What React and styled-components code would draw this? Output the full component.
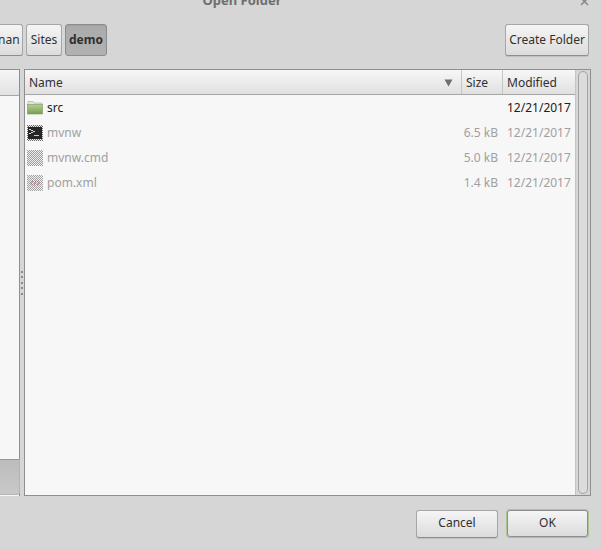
import React from 'react';
import styled, { createGlobalStyle } from 'styled-components';

const GlobalStyle = createGlobalStyle`
  html, body {
    margin: 0;
    padding: 0;
    background: #d6d6d6;
  }
`

const Dialog = styled.div`
  display: flex;
  flex-direction: column;
  width: 601px;
  height: 549px;
  overflow: hidden;
  background: #d6d6d6;
  color: #303030;
  font-family: "Noto Sans", sans-serif;
  font-size: 12px;
`
const TitleBar = styled.div`
  position: relative;
  flex: none;
  height: 8px;
  overflow: hidden;
  display: flex;
  justify-content: center;
  align-items: flex-end;
  font-size: 13px;
  font-weight: 700;
  color: #6e6e6e;
  line-height: 16px;
  padding-right: 117px;
`
const CloseMark = styled.svg`
  position: absolute;
  right: 11px;
  top: 0;
`
const PathRow = styled.div`
  flex: none;
  display: flex;
  justify-content: space-between;
  height: 32px;
  margin-top: 16px;
  padding-right: 12px;
`
const PathButtons = styled.div`
  display: flex;
  justify-content: flex-end;
  gap: 3px;
  width: 107px;
  overflow: hidden;
`
const Button = styled.button`
  box-sizing: border-box;
  flex: none;
  height: ${p => p.$h || 32}px;
  width: ${p => p.$w}px;
  padding: ${p => (p.$clipped ? '0 3px 2px 0' : '0 0 2px')};
  border: 1px solid #a6a6a6;
  border-bottom-color: #8e8e8e;
  border-radius: 3px;
  background: linear-gradient(#f5f5f5, #dcdcdc);
  box-shadow: 0 1px 0 #c0c0c0;
  color: #303030;
  font: inherit;
  text-align: ${p => (p.$clipped ? 'right' : 'center')};
`
const ActiveButton = styled(Button)`
  background: linear-gradient(#aaaaaa, #b2b2b2);
  border-color: #8c8c8c;
  font-weight: 700;
  box-shadow: inset 0 1px 1px #a0a0a0;
`
const OkButton = styled(Button)`
  border-color: #8e8e8e;
  box-shadow: 0 0 0 1px #a9c48f;
  margin: 1px;
`
const Main = styled.div`
  flex: none;
  display: flex;
  height: 427px;
  margin-top: 13px;
  padding-right: 11px;
`
const Sidebar = styled.div`
  box-sizing: border-box;
  flex: none;
  display: flex;
  flex-direction: column;
  width: 20px;
  border: 1px solid #8f8f8f;
  border-left: 0;
  border-bottom: 0;
  background: #f7f7f7;
`
const SidebarHead = styled.div`
  height: 25px;
  flex: none;
  background: linear-gradient(#f6f6f6, #e2e2e2);
  border-bottom: 1px solid #a6a6a6;
`
const SidebarList = styled.div`
  flex: 1;
`
const SidebarTools = styled.div`
  box-sizing: border-box;
  flex: none;
  height: 36px;
  margin: 0 -1px 1px 0;
  background: linear-gradient(#bcbcbc, #c8c8c8);
  border-top: 1px solid #969696;
  border-right: 1px solid #b4b4b4;
  border-bottom: 1px solid #b4b4b4;
  border-bottom-right-radius: 3px;
`
const Handle = styled.div`
  flex: none;
  width: 4px;
  display: flex;
  flex-direction: column;
  align-items: center;
  justify-content: center;
  gap: 3.5px;
`
const Dot = styled.i`
  width: 2px;
  height: 2px;
  background: #8a8a8a;
`
const FilePanel = styled.div`
  box-sizing: border-box;
  flex: 1;
  display: flex;
  border: 1px solid #8f8f8f;
  background: #f7f7f7;
`
const FileList = styled.div`
  flex: 1;
  display: flex;
  flex-direction: column;
  min-width: 0;
`
const HeadRow = styled.div`
  display: grid;
  grid-template-columns: 436px 41px 73px;
  flex: none;
  height: 25px;
  background: linear-gradient(#f7f7f7, #e0e0e0);
  border-bottom: 1px solid #a6a6a6;
  box-sizing: border-box;
`
const HeadCell = styled.div`
  display: flex;
  align-items: center;
  justify-content: space-between;
  padding: 1px 8px 0 4px;
  border-left: ${p => (p.$first ? '0' : '1px solid #c6c6c6')};
`
const Row = styled.div`
  display: grid;
  grid-template-columns: 436px 41px 73px;
  height: 25px;
  align-items: center;
  color: ${p => (p.$dim ? '#a0a0a0' : '#202020')};
`
const NameCell = styled.div`
  display: flex;
  align-items: center;
  gap: 4px;
  padding-left: 2px;
`
const SizeCell = styled.div`
  text-align: right;
  padding-right: 4px;
`
const DateCell = styled.div`
  padding-left: 5px;
`
const Scrollbar = styled.div`
  flex: none;
  box-sizing: border-box;
  width: 15px;
  background: #d6d6d6;
  border-left: 1px solid #c4c4c4;
  padding: 1px 2px;
  display: flex;
`
const Thumb = styled.div`
  flex: 1;
  border: 1px solid #a3a3a3;
  border-radius: 5px;
  background: #dcdcdc;
`
const Footer = styled.div`
  flex: none;
  display: flex;
  justify-content: flex-end;
  align-items: center;
  gap: 8px;
  height: 29px;
  margin-top: 13px;
  padding-right: 12px;
`

function FolderIcon() {
  return (
    <svg width="16" height="16" viewBox="0 0 16 16">
      <defs>
        <linearGradient id="folderFill" x1="0" y1="0" x2="0" y2="1">
          <stop offset="0" stopColor="#b4cf93" />
          <stop offset="1" stopColor="#76a04e" />
        </linearGradient>
      </defs>
      <path d="M1 1.5h5l1 1.5h8v3H1z" fill="#e4e4de" stroke="#aaaaa2" strokeWidth="0.6" />
      <rect x="0.5" y="4.5" width="15" height="9.5" fill="url(#folderFill)" stroke="#7d9a60" strokeWidth="0.6" />
    </svg>
  )
}

function DitherIcon({ id, fill, children }) {
  return (
    <svg width="16" height="16" viewBox="0 0 16 16" shapeRendering="crispEdges">
      <defs>
        <pattern id={id} width="2" height="2" patternUnits="userSpaceOnUse">
          <rect width="2" height="2" fill="#efefef" />
          <rect width="1" height="1" fill={fill} />
          <rect x="1" y="1" width="1" height="1" fill={fill} />
        </pattern>
      </defs>
      <rect width="16" height="16" fill={`url(#${id})`} />
      {children}
    </svg>
  )
}

function TerminalIcon() {
  return (
    <DitherIcon id="ditherTerm" fill="#6a6a6a">
      <rect x="1" y="2" width="14" height="12" fill="#262626" />
      <path d="M2 4l5 2.5-5 2.5" fill="none" stroke="#d8d8d8" />
      <rect x="7" y="10" width="5" height="1" fill="#c8c8c8" />
    </DitherIcon>
  )
}

function CmdIcon() {
  return <DitherIcon id="ditherCmd" fill="#9c9c9c" />
}

function XmlIcon() {
  return (
    <DitherIcon id="ditherXml" fill="#a4a4a4">
      <path d="M6 6L3.5 8 6 10M10 6l2.5 2L10 10M7 10.5l2-5" fill="none" stroke="#bd6f74" strokeWidth="0.9" shapeRendering="auto" />
    </DitherIcon>
  )
}

const files = [
  { name: 'src', size: '', date: '12/21/2017', Icon: FolderIcon },
  { name: 'mvnw', size: '6.5 kB', date: '12/21/2017', Icon: TerminalIcon, dim: true },
  { name: 'mvnw.cmd', size: '5.0 kB', date: '12/21/2017', Icon: CmdIcon, dim: true },
  { name: 'pom.xml', size: '1.4 kB', date: '12/21/2017', Icon: XmlIcon, dim: true },
]

export default function App() {
  return (
    <Dialog>
      <GlobalStyle />
      <TitleBar>
        Open Folder
        <CloseMark width="10" height="6" viewBox="0 0 10 6">
          <path d="M1 -2L8 5M8 -2L1 5" stroke="#8a8a8a" strokeWidth="1.6" />
        </CloseMark>
      </TitleBar>
      <PathRow>
        <PathButtons>
          <Button $w={26} $clipped>nan</Button>
          <Button $w={36}>Sites</Button>
          <ActiveButton $w={42}>demo</ActiveButton>
        </PathButtons>
        <Button $w={84}>Create Folder</Button>
      </PathRow>
      <Main>
        <Sidebar>
          <SidebarHead />
          <SidebarList />
          <SidebarTools />
        </Sidebar>
        <Handle>
          <Dot /><Dot /><Dot /><Dot /><Dot />
        </Handle>
        <FilePanel>
          <FileList>
            <HeadRow>
              <HeadCell $first>
                Name
                <svg width="9" height="8" viewBox="0 0 9 8">
                  <path d="M0.5 0.5h8L4.5 7.5z" fill="#6f6f6f" />
                </svg>
              </HeadCell>
              <HeadCell>Size</HeadCell>
              <HeadCell>Modified</HeadCell>
            </HeadRow>
            {files.map(f => (
              <Row key={f.name} $dim={f.dim}>
                <NameCell>
                  <f.Icon />
                  {f.name}
                </NameCell>
                <SizeCell>{f.size}</SizeCell>
                <DateCell>{f.date}</DateCell>
              </Row>
            ))}
          </FileList>
          <Scrollbar>
            <Thumb />
          </Scrollbar>
        </FilePanel>
      </Main>
      <Footer>
        <Button $w={82} $h={28}>Cancel</Button>
        <OkButton $w={81} $h={27}>OK</OkButton>
      </Footer>
    </Dialog>
  )
}
